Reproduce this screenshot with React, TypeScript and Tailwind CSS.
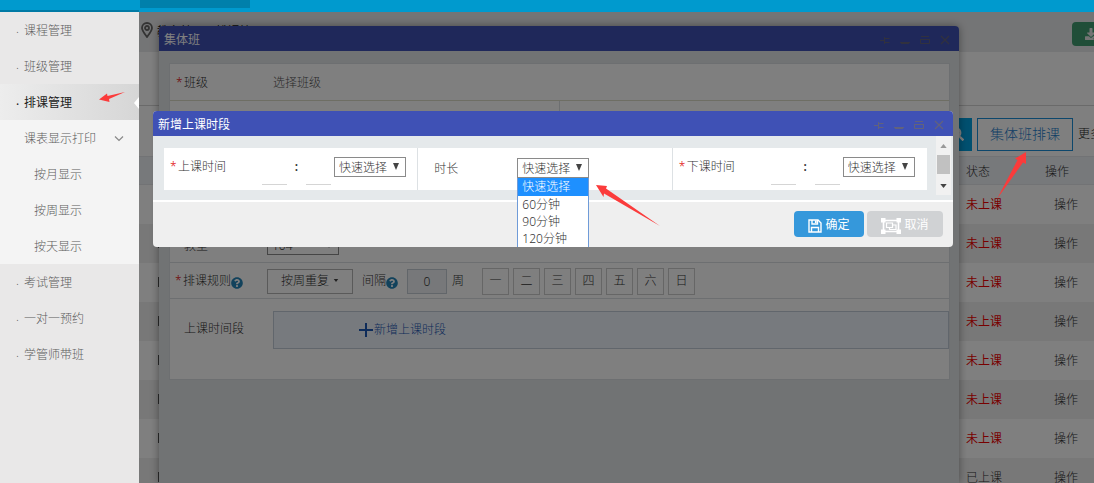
import React from "react";
import { FaDownload, FaQuestionCircle, FaSearch } from "react-icons/fa";

function WindowIcons() {
  const cls = "flex h-3 w-3 items-center justify-center";
  return (
    <div className="flex items-center gap-2 pt-0.5 text-[#62627c]">
      <button type="button" aria-label="固定" className={cls}>
        <svg viewBox="0 0 12 12" className="h-3 w-3" fill="none" stroke="currentColor">
          <path d="M1 6.500h4M5.500 3v7M6 4.500h4.500M6 8.500h4.500" />
        </svg>
      </button>
      <button type="button" aria-label="最小化" className={cls}>
        <svg viewBox="0 0 12 12" className="h-3 w-3" fill="none" stroke="currentColor">
          <path d="M1 8.500h10M2 9.500h8" />
        </svg>
      </button>
      <button type="button" aria-label="还原" className={cls}>
        <svg viewBox="0 0 12 12" className="h-3 w-3" fill="none" stroke="currentColor">
          <path d="M2 2.500h8M1 5.500h10M1.500 5v4.500h9V5" />
        </svg>
      </button>
      <button type="button" aria-label="关闭" className={cls}>
        <svg viewBox="0 0 12 12" className="h-3 w-3" fill="none" stroke="currentColor" strokeWidth="1.2">
          <path d="M2 2l8 8M10 2l-8 8" />
        </svg>
      </button>
    </div>
  );
}

function SaveIcon() {
  return (
    <svg viewBox="0 0 14 14" className="mt-0.5 h-3.5 w-3.5" fill="none" stroke="currentColor" strokeWidth="1.4">
      <path d="M1 1h9l3 3v9H1z" />
      <path d="M3.500 13V8.500h7V13M4 1v4h5.500V1" />
      <path d="M7.800 1.500v2.500" strokeWidth="1.800" />
    </svg>
  );
}

function GroupIcon() {
  return (
    <svg viewBox="0 0 20 16" className="mt-0.5 h-4 w-5" fill="none" stroke="currentColor" strokeWidth="1.6">
      <path d="M3 2.500h14M3 13.500h14M2.500 3v10M17.500 3v10" />
      <path d="M5.500 5h6v4.500h-6zM11.500 7h3.500v4.500H8.500V9.500" strokeWidth="1.200" />
      <path
        d="M0 0h4.500v4.500H0zM15.500 0H20v4.500h-4.500zM0 11.500h4.500V16H0zM15.500 11.500H20V16h-4.500z"
        fill="currentColor"
        stroke="none"
      />
    </svg>
  );
}

function TitleBar({ title }: { title: string }) {
  return (
    <div className="flex h-[25px] shrink-0 items-center justify-between rounded-t bg-[#3f51b5] pr-2 pl-[5px]">
      <h2 className="pt-0.5 text-xs font-normal text-white">{title}</h2>
      <WindowIcons />
    </div>
  );
}

function SelectBox({ id, label, value }: { id: string; label: string; value: string }) {
  return (
    <div className="relative w-[72px] shrink-0">
      <select
        id={id}
        aria-label={label}
        defaultValue={value}
        className="block h-5 w-full appearance-none border border-[#8a8a8a] bg-white pt-px pl-1 text-xs leading-4 text-[#333]"
      >
        <option>{value}</option>
      </select>
      <svg viewBox="0 0 8 8" className="pointer-events-none absolute top-1.5 right-1.5 h-2 w-2" fill="#444">
        <path d="M1 0h6L4 7z" />
      </svg>
    </div>
  );
}

const Star = () => <span className="w-2 shrink-0 text-[#e00000]">*</span>;

function NavItem({ text, active }: { text: string; active?: boolean }) {
  return (
    <li>
      <a
        href="#"
        className={
          active
            ? "relative flex h-9 items-center bg-linear-to-r from-[#ededed] to-[#d6d6d6] pt-0.5 pl-4 font-normal text-[#222]"
            : "flex h-9 items-center pt-0.5 pl-4 text-[#5c5c5c]"
        }
      >
        <span className="w-2 shrink-0 pb-1">.</span>
        {text}
        {active && (
          <svg viewBox="0 0 5 12" className="absolute right-0 h-3 w-[5px]" fill="#fff">
            <path d="M5 0v12L0 6z" />
          </svg>
        )}
      </a>
    </li>
  );
}

function Sidebar() {
  return (
    <nav className="w-[139px] shrink-0 bg-[#e9e8e8] text-xs">
      <ul>
        <NavItem text="课程管理" />
        <NavItem text="班级管理" />
        <NavItem text="排课管理" active />
        <li className="bg-[#f4f4f4] text-[#5c5c5c]">
          <button type="button" className="flex h-9 w-full items-center justify-between pt-0.5 pr-[15px] pl-6">
            课表显示打印
            <svg viewBox="0 0 10 10" className="h-2.5 w-2.5" fill="none" stroke="#888" strokeWidth="1.2">
              <path d="M1 2.500l4 4 4-4" />
            </svg>
          </button>
          <ul>
            {["按月显示", "按周显示", "按天显示"].map((t) => (
              <li key={t}>
                <a href="#" className="flex h-9 items-center pt-0.5 pl-[34px]">
                  {t}
                </a>
              </li>
            ))}
          </ul>
        </li>
        <NavItem text="考试管理" />
        <NavItem text="一对一预约" />
        <NavItem text="学管师带班" />
      </ul>
    </nav>
  );
}

const rows = ["未上课", "未上课", "未上课", "未上课", "未上课", "未上课", "未上课", "已上课"];

function SchedulePage() {
  return (
    <div className="bg-white text-xs text-[#333]">
      <div className="flex h-10 items-center justify-between bg-[#e9eaec]">
        <div className="flex items-center gap-1 pl-0.5 text-[#111]">
          <svg viewBox="0 0 12 16" className="-mt-1 h-4 w-3" fill="none" stroke="#666" strokeWidth="1.8">
            <path d="M6 15C3 11 1 8.500 1 6a5 5 0 0 1 10 0c0 2.500-2 5-5 9z" />
            <circle cx="6" cy="6" r="2" />
          </svg>
          <span className="font-normal">教务管理 / 排课管理</span>
        </div>
        <button
          type="button"
          aria-label="下载"
          className="mt-1 -mr-[26px] flex h-6 w-12 items-center rounded bg-[#409c70] pl-[13px] text-[#e8e8e8]"
        >
          <FaDownload className="h-3 w-3" />
        </button>
      </div>
      <div className="h-[54px] border-b border-[#d5d5d5]" />
      <div className="-mr-2 flex h-[50px] items-center justify-end gap-[5px] pt-1.5">
        <button
          type="button"
          aria-label="搜索"
          className="flex h-[33px] w-10 items-center justify-end bg-[#00a0e0] pr-2 text-white"
        >
          <FaSearch className="h-3.5 w-3.5" />
        </button>
        <button
          type="button"
          className="flex h-[33px] w-24 items-center justify-center border border-[#1a8fd8] text-sm text-[#1c7ccc]"
        >
          集体班排课
        </button>
        <a href="#" className="text-[#222]">
          更多
        </a>
      </div>
      <table className="w-full table-fixed text-left">
        <thead>
          <tr className="h-7 border-y border-[#e4e7ea] bg-[#eff3f7]">
            <th className="w-[19px]" />
            <th />
            <th className="w-[79px] pt-0.5 font-light">状态</th>
            <th className="w-[49px] pt-0.5 font-light">操作</th>
          </tr>
        </thead>
        <tbody>
          {rows.map((status, i) => (
            <tr key={i} className={i % 2 ? "h-[39px] bg-[#f0f0f0]" : "h-[39px] bg-white"}>
              <td />
              <td>
                <div className="h-2.5 border-l border-[#555]" />
              </td>
              <td className={status === "未上课" ? "pt-px font-normal text-[#f00000]" : "pt-px"}>{status}</td>
              <td className="pt-px pl-[9px]">
                <a href="#">操作</a>
              </td>
            </tr>
          ))}
        </tbody>
      </table>
    </div>
  );
}

function ClassDialog() {
  return (
    <section className="absolute top-3.5 right-[135px] bottom-0 left-5 flex flex-col rounded-t bg-[#e2e6e9] text-xs text-[#333] shadow-[0_0_8px_rgba(0,0,0,0.4)]">
      <TitleBar title="集体班" />
      <div className="mr-[9px] ml-[10px] mt-3 border border-[#dadfe2] bg-white">
        <div className="flex h-[37px] items-center border-b border-[#dcdcc8] pt-px pl-1.5">
          <Star />
          <span className="w-[89px]">班级</span>
          <span className="text-[#555]">选择班级</span>
        </div>
        <div className="grid h-[127px] grid-cols-2">
          <div className="border-r border-[#dadfe2]" />
        </div>
        <div className="flex h-[35px] items-center border-b border-[#dadfe2] pl-3.5">
          <label htmlFor="room" className="w-[83px] pt-0.5">
            教室
          </label>
          <SelectBox id="room" label="教室" value="104" />
        </div>
        <div className="flex h-9 items-center border-b border-[#dadfe2] pt-px pl-[5px]">
          <Star />
          <span className="flex w-[84px] items-center">
            排课规则
            <FaQuestionCircle className="mt-1 h-3 w-3 text-[#2585b8]" />
          </span>
          <button
            type="button"
            className="flex h-[25px] w-[86px] items-center justify-center gap-1 border border-[#b5b5b5]"
          >
            按周重复
            <svg viewBox="0 0 6 4" className="-mt-0.5 h-[3px] w-1.5" fill="#444">
              <path d="M0 0h6L3 4z" />
            </svg>
          </button>
          <label htmlFor="gap" className="ml-[9px] flex items-center">
            间隔
            <FaQuestionCircle className="mt-1 h-3 w-3 text-[#2585b8]" />
          </label>
          <input
            id="gap"
            defaultValue="0"
            className="ml-[9px] h-[25px] w-10 border border-[#c5cdd5] bg-[#eef1f4] text-center"
          />
          <span className="ml-[5px]">周</span>
          <div className="ml-[18px] flex gap-1">
            {["一", "二", "三", "四", "五", "六", "日"].map((d) => (
              <button key={d} type="button" className="h-[27px] w-[27px] border border-[#ccc]">
                {d}
              </button>
            ))}
          </div>
        </div>
        <div className="flex h-20 items-start pt-3 pl-3.5">
          <span className="flex h-9 w-[89px] items-center">上课时间段</span>
          <button
            type="button"
            className="flex h-[38px] flex-1 items-center border border-[#c3cdd8] bg-[#eff5fd] pl-[85px] text-[#1c58b4]"
          >
            <svg viewBox="0 0 14 14" className="mr-px h-3.5 w-3.5" fill="none" stroke="currentColor" strokeWidth="2">
              <path d="M7 0v14M0 7h14" />
            </svg>
            新增上课时段
          </button>
        </div>
      </div>
    </section>
  );
}

function TimeCell({ id, label }: { id: string; label: string }) {
  const input = "mt-4 h-5 w-[25px] shrink-0 border-b border-[#d5d5d5] bg-transparent text-center";
  return (
    <div className="flex items-center pb-1 pl-1.5">
      <Star />
      <label htmlFor={id} className="w-[84px]">
        {label}
      </label>
      <input id={id} aria-label={label + "时"} className={input} />
      <span className="w-[19px] text-center font-semibold">:</span>
      <input aria-label={label + "分"} className={input} />
      <span className="w-[3px]" />
      <SelectBox id={id + "-quick"} label={label + "快速选择"} value="快速选择" />
    </div>
  );
}

function TimeDialog() {
  return (
    <section className="absolute top-[111px] right-[141px] left-[153px] rounded bg-[#efefef] text-xs text-[#333]">
      <TitleBar title="新增上课时段" />
      <div className="flex h-[66px] border-b-2 border-white bg-[#e5e9eb]">
        <div className="mt-3 ml-[11px] grid h-[42px] flex-1 grid-cols-3 divide-x divide-[#dde1e4] bg-white">
          <TimeCell id="start" label="上课时间" />
          <div className="flex items-start pt-2.5 pl-4">
            <label htmlFor="length" className="w-[83px] pt-[3px]">
              时长
            </label>
            <div className="relative">
              <SelectBox id="length" label="时长" value="快速选择" />
              <ul
                role="listbox"
                aria-label="时长选项"
                className="absolute top-5 left-0 z-10 h-[69px] w-[72px] border-x border-[#6f9bd8] bg-white leading-[17px]"
              >
                {["快速选择", "60分钟", "90分钟", "120分钟"].map((t, i) => (
                  <li
                    key={t}
                    role="option"
                    aria-selected={i === 0}
                    className={i === 0 ? "h-[18px] bg-[#1e90ff] pl-1 text-white" : "h-[17px] pl-1"}
                  >
                    {t}
                  </li>
                ))}
              </ul>
            </div>
          </div>
          <TimeCell id="end" label="下课时间" />
        </div>
        <div className="mr-0.5 ml-[9px] flex h-[59px] w-[15px] flex-col items-center justify-between bg-[#f1f1f1] pt-2 pb-[7px]">
          <svg viewBox="0 0 8 5" className="h-1 w-[7px]" fill="#999">
            <path d="M0 5h8L4 0z" />
          </svg>
          <div className="-mt-1 h-[19px] w-[13px] bg-[#c1c1c1]" />
          <svg viewBox="0 0 8 5" className="h-1 w-[7px]" fill="#444">
            <path d="M0 0h8L4 5z" />
          </svg>
        </div>
      </div>
      <div className="flex h-[45px] items-center justify-end gap-[3px] pr-[10px] pb-px">
        <button
          type="button"
          className="flex h-[26px] w-[70px] items-center justify-center gap-[3px] rounded bg-[#3598db] pt-px font-normal text-white"
        >
          <SaveIcon />
          确定
        </button>
        <button
          type="button"
          className="flex h-[26px] w-[76px] items-center justify-center gap-[3px] rounded bg-[#d0d2d4] pt-px font-normal text-white"
        >
          <GroupIcon />
          取消
        </button>
      </div>
    </section>
  );
}

export default function App() {
  return (
    <div className="relative flex h-screen flex-col overflow-hidden bg-white font-['Noto_Sans','Noto_Sans_CJK_SC',sans-serif] font-light">
      <header className="flex h-3 shrink-0 bg-[#009ace]">
        <div className="w-[139px] border-b-2 border-[#007aa5]" />
        <div className="ml-px h-2 w-[110px] bg-[#0080ab]" />
      </header>
      <div className="flex min-h-0 flex-1">
        <Sidebar />
        <main className="relative min-w-0 flex-1 overflow-hidden">
          <SchedulePage />
          <ClassDialog />
          <div className="absolute inset-0 bg-black/50" />
        </main>
      </div>
      <TimeDialog />
      <svg viewBox="0 0 26 12" className="absolute top-[91px] left-[99px] h-3 w-[26px]" fill="#fb3b3b">
        <path d="M0 8.500L8 2.500 8.500 5 26 1 10 8 10.500 11z" />
      </svg>
      <svg viewBox="0 0 64 42" className="absolute top-[185px] left-[596px] h-[42px] w-16" fill="#fb3b3b">
        <path d="M0 0l11 1-1 2.500L64 41 8 8.500 7.500 12z" />
      </svg>
      <svg viewBox="0 0 30 48" className="absolute top-[152px] right-[67px] h-12 w-[30px]" fill="#fb3b3b">
        <path d="M29 0l0 12-3-1.500L0 47 20.500 8 18 6.500z" />
      </svg>
    </div>
  );
}
